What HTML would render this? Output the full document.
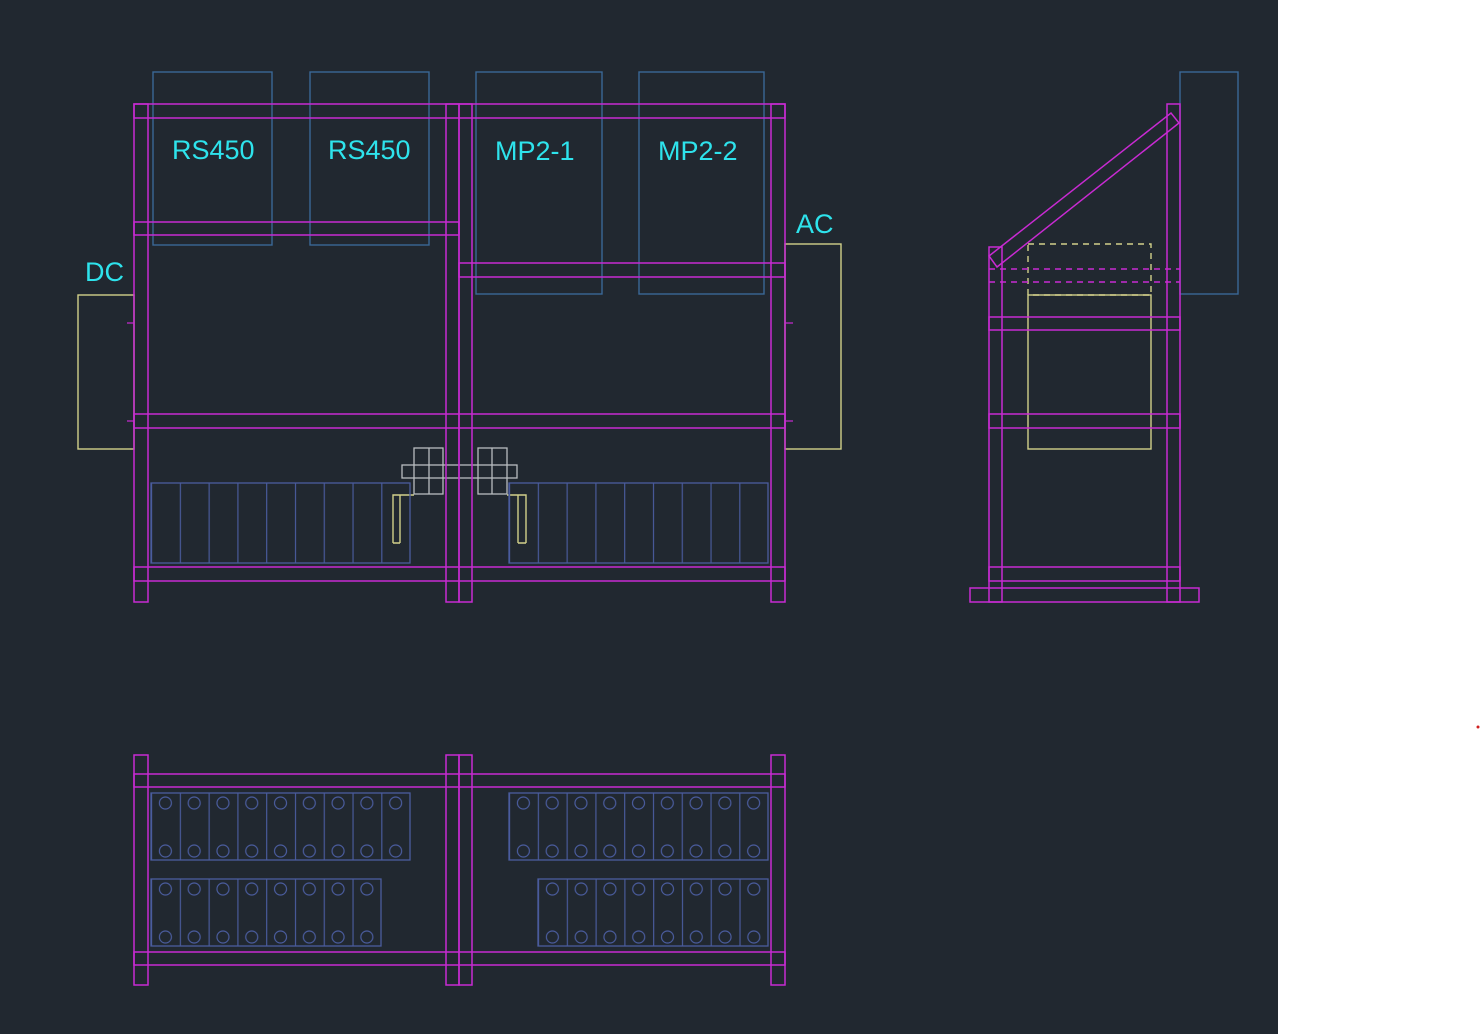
<!DOCTYPE html>
<html><head><meta charset="utf-8"><style>
html,body{margin:0;padding:0;background:#fff;}
svg{display:block}
text{font-family:"Liberation Sans",sans-serif;fill:#2ee3ec;font-size:27px}
</style></head><body>
<svg width="1481" height="1034" viewBox="0 0 1481 1034" xmlns="http://www.w3.org/2000/svg">
<defs>
<pattern id="fl" patternUnits="userSpaceOnUse" x="151" y="483" width="28.78" height="80"><line x1="0.5" y1="0" x2="0.5" y2="80" stroke="#4a5c9e" stroke-width="1.3"/></pattern>
<pattern id="fr" patternUnits="userSpaceOnUse" x="509" y="483" width="28.78" height="80"><line x1="0.5" y1="0" x2="0.5" y2="80" stroke="#4a5c9e" stroke-width="1.3"/></pattern>
<pattern id="t1" patternUnits="userSpaceOnUse" x="151" y="793" width="28.78" height="67"><line x1="0.5" y1="0" x2="0.5" y2="67" stroke="#4a5c9e" stroke-width="1.3"/><circle cx="14.4" cy="10" r="6" fill="none" stroke="#4a5c9e" stroke-width="1.2"/><circle cx="14.4" cy="58" r="6" fill="none" stroke="#4a5c9e" stroke-width="1.2"/></pattern>
<pattern id="t2" patternUnits="userSpaceOnUse" x="151" y="879" width="28.78" height="67"><line x1="0.5" y1="0" x2="0.5" y2="67" stroke="#4a5c9e" stroke-width="1.3"/><circle cx="14.4" cy="10" r="6" fill="none" stroke="#4a5c9e" stroke-width="1.2"/><circle cx="14.4" cy="58" r="6" fill="none" stroke="#4a5c9e" stroke-width="1.2"/></pattern>
<pattern id="t3" patternUnits="userSpaceOnUse" x="509" y="793" width="28.78" height="67"><line x1="0.5" y1="0" x2="0.5" y2="67" stroke="#4a5c9e" stroke-width="1.3"/><circle cx="14.4" cy="10" r="6" fill="none" stroke="#4a5c9e" stroke-width="1.2"/><circle cx="14.4" cy="58" r="6" fill="none" stroke="#4a5c9e" stroke-width="1.2"/></pattern>
<pattern id="t4" patternUnits="userSpaceOnUse" x="509.2" y="879" width="28.78" height="67"><line x1="0.5" y1="0" x2="0.5" y2="67" stroke="#4a5c9e" stroke-width="1.3"/><circle cx="14.4" cy="10" r="6" fill="none" stroke="#4a5c9e" stroke-width="1.2"/><circle cx="14.4" cy="58" r="6" fill="none" stroke="#4a5c9e" stroke-width="1.2"/></pattern>
</defs>
<rect x="0" y="0" width="1278" height="1034" fill="#212830"/>
<rect x="1278" y="0" width="203" height="1034" fill="#fff"/>
<circle cx="1478" cy="727" r="1.5" fill="#d02020"/>

<!-- blue module boxes -->
<g fill="none" stroke="#3a6896" stroke-width="1.4">
<rect x="153" y="72" width="119" height="173"/>
<rect x="310" y="72" width="119" height="173"/>
<rect x="476" y="72" width="126" height="222"/>
<rect x="639" y="72" width="125" height="222"/>
<rect x="1180" y="72" width="58" height="222"/>
</g>

<!-- yellow boxes -->
<g fill="none" stroke="#d2d08a" stroke-width="1.4">
<rect x="78" y="295" width="56" height="154"/>
<rect x="785" y="244" width="56" height="205"/>
<rect x="1028" y="295" width="123" height="154"/>
<path d="M393 543V495H414M400 543V495M393 543H400" />
<path d="M526 543V495H507M518 543V495M518 543H526" />
<rect x="1028" y="244" width="123" height="51" stroke-dasharray="6 5"/>
</g>
<g stroke="#c82ad2" stroke-width="1.2">
<line x1="127" y1="323" x2="134" y2="323"/><line x1="127" y1="421" x2="134" y2="421"/>
<line x1="785" y1="323" x2="793" y2="323"/><line x1="785" y1="421" x2="793" y2="421"/>
</g>

<!-- front batteries -->
<rect x="151" y="483" width="259" height="80" fill="url(#fl)" stroke="#4a5c9e" stroke-width="1.3"/>
<rect x="509" y="483" width="259" height="80" fill="url(#fr)" stroke="#4a5c9e" stroke-width="1.3"/>

<!-- gray connectors -->
<g fill="none" stroke="#b8bcc0" stroke-width="1.3">
<rect x="414" y="448" width="29" height="46"/><line x1="429" y1="448" x2="429" y2="494"/>
<rect x="478" y="448" width="29" height="46"/><line x1="492" y1="448" x2="492" y2="494"/>
<rect x="402" y="465" width="115" height="13"/>
</g>

<!-- front frame -->
<g fill="none" stroke="#c82ad2" stroke-width="1.5">
<rect x="134" y="104" width="14" height="498"/>
<rect x="446" y="104" width="13" height="498"/>
<rect x="459" y="104" width="13" height="498"/>
<rect x="771" y="104" width="14" height="498"/>
<rect x="134" y="104" width="651" height="14"/>
<rect x="134" y="222" width="325" height="13"/>
<rect x="459" y="263" width="326" height="14"/>
<rect x="134" y="414" width="651" height="14"/>
<rect x="134" y="567" width="651" height="14"/>
</g>

<!-- side view -->
<g fill="none" stroke="#c82ad2" stroke-width="1.5">
<rect x="989" y="247" width="13" height="355"/>
<rect x="1167" y="104" width="13" height="498"/>
<polygon points="989,256 1171,113 1179,123 997,267"/>
<rect x="989" y="317" width="191" height="13"/>
<rect x="989" y="414" width="191" height="14"/>
<rect x="989" y="567" width="191" height="14"/>
<rect x="970" y="588" width="229" height="14"/>
<line x1="989" y1="269" x2="1180" y2="269" stroke-dasharray="6 5"/>
<line x1="989" y1="282" x2="1180" y2="282" stroke-dasharray="6 5"/>
</g>

<!-- top view batteries -->
<rect x="151" y="793" width="259" height="67" fill="url(#t1)" stroke="#4a5c9e" stroke-width="1.3"/>
<rect x="151" y="879" width="230" height="67" fill="url(#t2)" stroke="#4a5c9e" stroke-width="1.3"/>
<rect x="509" y="793" width="259" height="67" fill="url(#t3)" stroke="#4a5c9e" stroke-width="1.3"/>
<rect x="538" y="879" width="230" height="67" fill="url(#t4)" stroke="#4a5c9e" stroke-width="1.3"/>

<!-- top view frame -->
<g fill="none" stroke="#c82ad2" stroke-width="1.5">
<rect x="134" y="755" width="14" height="230"/>
<rect x="446" y="755" width="13" height="230"/>
<rect x="459" y="755" width="13" height="230"/>
<rect x="771" y="755" width="14" height="230"/>
<rect x="134" y="774" width="651" height="13"/>
<rect x="134" y="952" width="651" height="13"/>
</g>

<!-- labels -->
<text x="172" y="159">RS450</text>
<text x="328" y="159">RS450</text>
<text x="495" y="160">MP2-1</text>
<text x="658" y="160">MP2-2</text>
<text x="796" y="233">AC</text>
<text x="85" y="281">DC</text>
</svg>
</body></html>
